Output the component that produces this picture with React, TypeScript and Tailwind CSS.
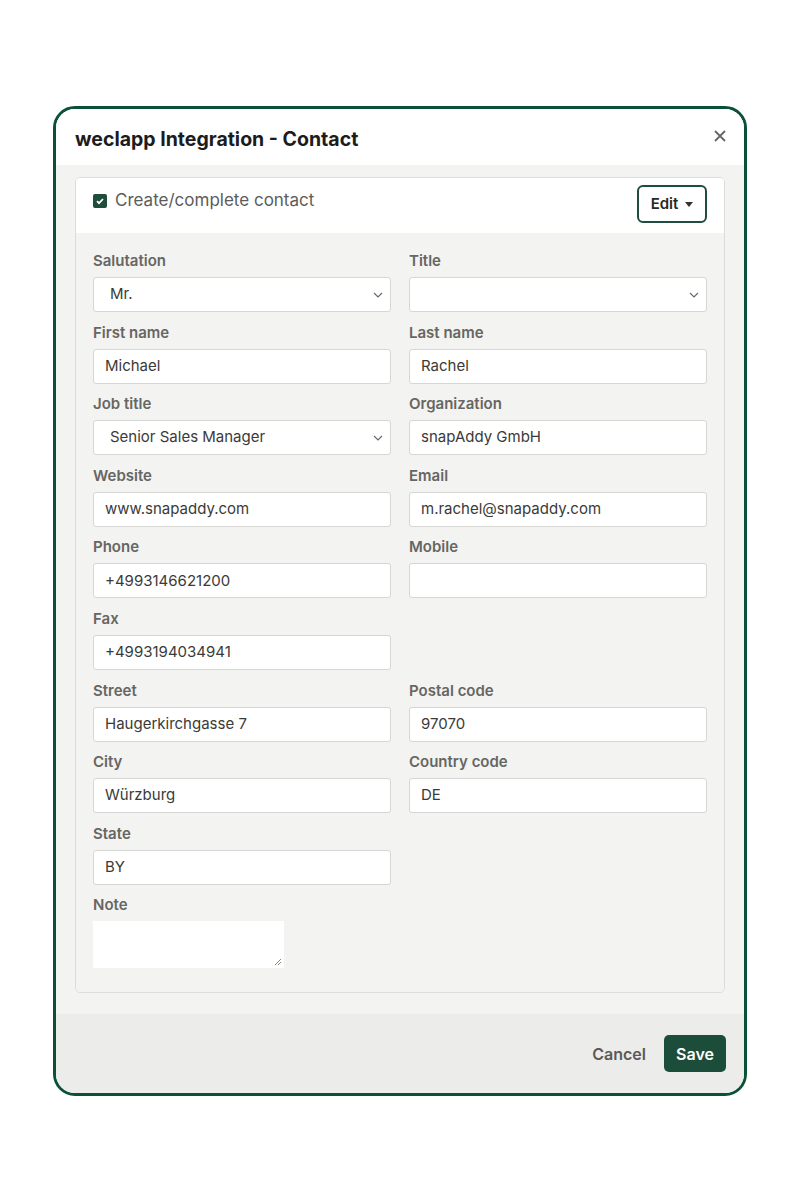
import React from "react";

const Chevron = () => (
  <svg width="10" height="6" viewBox="0 0 10 6" className="absolute right-[7px] top-1/2 -translate-y-1/2" fill="none">
    <path d="M1 1l4 4 4-4" stroke="#666" strokeWidth="1.1" />
  </svg>
);

type F = { label: string; value?: string; select?: boolean } | null;

const rows: [F, F][] = [
  [{ label: "Salutation", value: "Mr.", select: true }, { label: "Title", value: "", select: true }],
  [{ label: "First name", value: "Michael" }, { label: "Last name", value: "Rachel" }],
  [{ label: "Job title", value: "Senior Sales Manager", select: true }, { label: "Organization", value: "snapAddy GmbH" }],
  [{ label: "Website", value: "www.snapaddy.com" }, { label: "Email", value: "m.rachel@snapaddy.com" }],
  [{ label: "Phone", value: "+4993146621200" }, { label: "Mobile", value: "" }],
  [{ label: "Fax", value: "+4993194034941" }, null],
  [{ label: "Street", value: "Haugerkirchgasse 7" }, { label: "Postal code", value: "97070" }],
  [{ label: "City", value: "Würzburg" }, { label: "Country code", value: "DE" }],
  [{ label: "State", value: "BY" }, null],
];

function Field({ f }: { f: F }) {
  if (!f) return <div />;
  return (
    <div className="flex flex-col">
      <div className="text-[15px] leading-[18px] font-semibold text-[#666662] mb-[7px]">{f.label}</div>
      <div className="relative h-[35px] bg-white border border-[#d6d6d4] rounded-[3px] flex items-center">
        <span className={`text-[15px] text-[#3a3a38] ${f.select ? "pl-[16px]" : "pl-[11px]"}`}>{f.value}</span>
        {f.select && <Chevron />}
      </div>
    </div>
  );
}

export default function App() {
  return (
    <div className="w-[800px] h-[1200px] bg-white pt-[106px]" style={{ fontFamily: "Inter, 'Liberation Sans', sans-serif" }}>
      <div className="mx-auto w-[694px] border-[3px] border-[#0b5139] rounded-[22px] overflow-hidden bg-white">
        {/* header */}
        <div className="h-[56px] bg-white flex items-center justify-between pl-[19px] pr-[18px]">
          <div className="text-[19.5px] font-bold text-[#1c1c1c] tracking-[0px] pt-[6px]">
            weclapp Integration - Contact
          </div>
          <svg width="12" height="12" viewBox="0 0 12 12" className="mb-[2px]">
            <path d="M1 1l10 10M11 1L1 11" stroke="#666" strokeWidth="1.8" />
          </svg>
        </div>
        {/* body */}
        <div className="bg-[#f3f3f2] pt-[12px] pb-[21px] px-[19px]">
          <div className="border border-[#dcdcda] rounded-[5px] overflow-hidden">
            <div className="h-[55px] bg-white flex items-start justify-between pl-[17px] pr-[17px]">
              <div className="flex items-center gap-[8px] pt-[10px]">
                <div className="w-[14px] h-[14px] rounded-[2px] bg-[#1f4d3b] flex items-center justify-center">
                  <svg width="10" height="10" viewBox="0 0 10 10">
                    <path d="M2 5.2l2 2L8 3" stroke="white" strokeWidth="1.8" fill="none" />
                  </svg>
                </div>
                <span className="text-[17px] text-[#5c5c5a]">Create/complete contact</span>
              </div>
              <div className="mt-[7px] h-[38px] w-[70px] border-2 border-[#1f4d3b] rounded-[6px] flex items-center justify-center gap-[7px]">
                <span className="text-[15px] font-semibold text-[#1f2a24]">Edit</span>
                <svg width="8" height="5" viewBox="0 0 8 5"><path d="M0 0h8L4 5z" fill="#333" /></svg>
              </div>
            </div>
            <div className="bg-[#f3f3f2] pt-[19px] pb-[24px] px-[17px]">
              <div className="grid grid-cols-2 gap-x-[18px] gap-y-[11.6px]">
                {rows.map(([a, b], i) => (
                  <React.Fragment key={i}>
                    <Field f={a} />
                    <Field f={b} />
                  </React.Fragment>
                ))}
                <div className="flex flex-col">
                  <div className="text-[15px] leading-[18px] font-semibold text-[#666662] mb-[7px]">Note</div>
                  <div className="relative w-[191px] h-[47px] bg-white">
                    <svg width="8" height="8" viewBox="0 0 8 8" className="absolute right-[2px] bottom-[2px]">
                      <path d="M7 1L1 7M7 4L4 7" stroke="#888" strokeWidth="1" />
                    </svg>
                  </div>
                </div>
              </div>
            </div>
          </div>
        </div>
        {/* footer */}
        <div className="h-[79px] bg-[#ececeb] flex items-center justify-end gap-[18px] pr-[18px]">
          <span className="text-[16px] font-semibold text-[#5a5a58]">Cancel</span>
          <div className="h-[37px] w-[62px] bg-[#1c4d3b] rounded-[5px] flex items-center justify-center text-[16px] font-semibold text-white">
            Save
          </div>
        </div>
      </div>
    </div>
  );
}
